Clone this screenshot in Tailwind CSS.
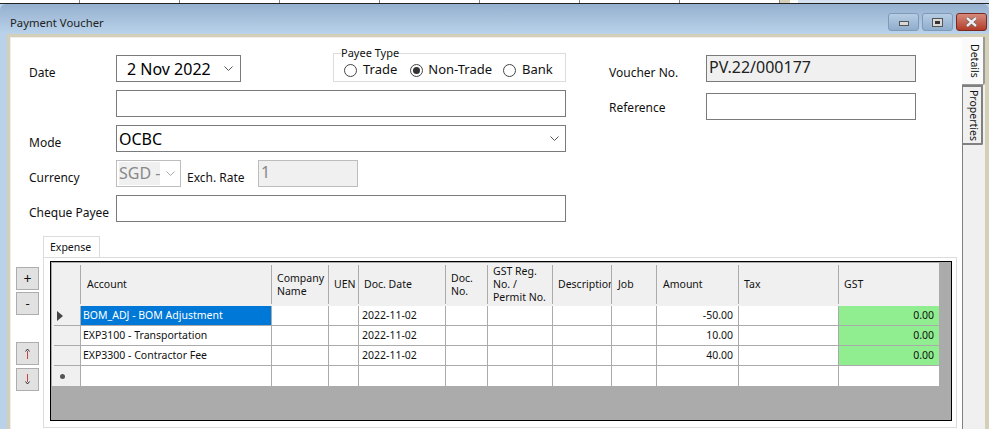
<!DOCTYPE html>
<html lang="en">
<head>
<meta charset="UTF-8">
<title>Payment Voucher</title>
<script src="https://cdn.jsdelivr.net/npm/@tailwindcss/browser@4"></script>
</head>
<body class="w-[989px] h-[429px] overflow-hidden bg-[#b9d2ea] font-['Noto_Sans',sans-serif] text-[12px] text-[#111]">
  <!-- strip of the window behind -->
  <div class="flex h-[4px] bg-white border-b border-[#222]">
    <div class="w-[80px] h-[3px] border-r border-[#888]"></div>
    <div class="w-[100px] h-[3px] border-r border-[#888]"></div>
    <div class="w-[100px] h-[3px] border-r border-[#888]"></div>
    <div class="w-[100px] h-[3px] border-r border-[#888]"></div>
    <div class="w-[100px] h-[3px] border-r border-[#888]"></div>
    <div class="w-[100px] h-[3px] border-r border-[#888]"></div>
    <div class="w-[100px] h-[3px] border-r border-[#888]"></div>
    <div class="w-[100px] h-[3px] border-r border-[#888]"></div>
    <div class="w-[10px] h-[3px] bg-[#d4d0b8]"></div>
    <div class="w-[8px] h-[3px]"></div>
    <div class="flex-1 h-[3px] bg-[#d6e2ef]"></div>
  </div>

  <!-- title bar -->
  <div class="flex h-[30px] rounded-t-[6px] bg-gradient-to-b from-[#95b0ce] to-[#bad3eb]">
    <div class="pl-[10px] pt-[11px] text-[11.3px] leading-[15px] text-[#222]">Payment Voucher</div>
    <div class="ml-auto flex gap-[3px] pt-[9px] pr-[2px]">
      <button class="w-[31px] h-[18px] flex items-end justify-center pb-[4px] rounded-[3px] border border-[#7f9ab8] bg-gradient-to-b from-[#b7cde4] to-[#8fadcc]">
        <span class="w-[10px] h-[5px] bg-[#d9d9d9] border border-[#555]"></span>
      </button>
      <button class="w-[31px] h-[18px] flex items-center justify-center rounded-[3px] border border-[#7f9ab8] bg-gradient-to-b from-[#b7cde4] to-[#8fadcc]">
        <span class="w-[9px] h-[7px] bg-[#333] border-2 border-[#d9d9d9] outline outline-[#555]"></span>
      </button>
      <button class="w-[31px] h-[18px] flex items-center justify-center rounded-[3px] border border-[#7a2a20] bg-gradient-to-b from-[#d68a7c] to-[#b23a28]">
        <svg width="13" height="10" viewBox="0 0 13 10"><path d="M2 1 L11 9 M11 1 L2 9" stroke="#555" stroke-width="3.6"/><path d="M2 1 L11 9 M11 1 L2 9" stroke="#eee" stroke-width="2.4"/></svg>
      </button>
    </div>
  </div>

  <!-- window frame -->
  <div class="flex h-[395px] ml-[7px] border-t-[3px] border-l-[3px] border-[#d4d0b8] bg-[#d4d0b8]">
    <div class="w-[952px] border-t border-l border-[#eee] bg-white shrink-0 pl-[18px] pt-[17px]">

      <div class="flex h-[97px]">
        <!-- left part of the header -->
        <div class="w-[537px] shrink-0">
          <div class="flex h-[35px]">
            <div class="w-[87px] pt-[10px] leading-[16px]">Date</div>
            <div class="w-[125px] h-[27px] border border-[#7a7a7a] flex items-center pl-[10px] pr-[7px] text-[16px] text-black">
              2 Nov 2022
              <svg class="ml-auto" width="9" height="5" viewBox="0 0 9 5"><path d="M0.5 0.5 L4.5 4.5 L8.5 0.5" fill="none" stroke="#555"/></svg>
            </div>
            <fieldset class="ml-[92px] -mt-[8px] w-[233px] h-[35px] border border-[#dcdcdc] pl-[7px]">
              <legend class="text-[11px] leading-[12px]">Payee Type</legend>
              <div class="flex items-center h-[22px] ml-[3px] text-[13px] whitespace-nowrap">
                <span class="w-[13px] h-[13px] rounded-full border border-[#444] bg-white"></span>
                <span class="ml-[6px]">Trade</span>
                <span class="ml-[13px] w-[13px] h-[13px] rounded-full border border-[#444] flex items-center justify-center"><span class="w-[7px] h-[7px] rounded-full bg-[#333]"></span></span>
                <span class="ml-[5px]">Non-Trade</span>
                <span class="ml-[11px] w-[13px] h-[13px] rounded-full border border-[#444] bg-white"></span>
                <span class="ml-[6px]">Bank</span>
              </div>
            </fieldset>
          </div>
          <div class="ml-[87px] w-[450px] h-[27px] border border-[#7a7a7a]"></div>
        </div>
        <!-- voucher side -->
        <div class="ml-[43px] w-[307px]">
          <div class="flex h-[38px]">
            <div class="w-[97px] pt-[10px] leading-[16px]">Voucher No.</div>
            <div class="w-[210px] h-[27px] border border-[#7a7a7a] bg-[#f0f0f0] pl-[2px] text-[16px] leading-[23px] text-[#222]">PV.22/000177</div>
          </div>
          <div class="flex">
            <div class="w-[97px] pt-[7px] leading-[16px]">Reference</div>
            <div class="w-[210px] h-[27px] border border-[#7a7a7a]"></div>
          </div>
        </div>
      </div>

      <div class="w-[537px] flex h-[35px] -mt-[27px] relative">
        <div class="w-[87px] pt-[10px] leading-[16px]">Mode</div>
        <div class="w-[450px] h-[27px] border border-[#7a7a7a] flex items-center pl-[2px] pr-[6px] text-[16px] text-black">
          OCBC
          <svg class="ml-auto" width="9" height="5" viewBox="0 0 9 5"><path d="M0.5 0.5 L4.5 4.5 L8.5 0.5" fill="none" stroke="#555"/></svg>
        </div>
      </div>
      <div class="flex h-[35px] w-[537px]">
        <div class="w-[87px] pt-[10px] leading-[16px]">Currency</div>
        <div class="w-[65px] h-[27px] border border-[#bdbdbd] flex items-center pl-[2px] pr-[5px]">
          <span class="bg-[#f0f0f0] text-[16px] leading-[23px] text-[#888] w-[41px] overflow-hidden whitespace-nowrap">SGD -</span>
          <svg class="ml-auto" width="9" height="5" viewBox="0 0 9 5"><path d="M0.5 0.5 L4.5 4.5 L8.5 0.5" fill="none" stroke="#aaa"/></svg>
        </div>
        <div class="ml-[6px] w-[71px] pt-[10px] leading-[16px]">Exch. Rate</div>
        <div class="w-[100px] h-[27px] border border-[#bdbdbd] bg-[#f0f0f0] pl-[2px] text-[16px] leading-[23px] text-[#888]">1</div>
      </div>
      <div class="flex h-[41px] w-[537px]">
        <div class="w-[87px] pt-[10px] leading-[16px] whitespace-nowrap">Cheque Payee</div>
        <div class="w-[450px] h-[27px] border border-[#7a7a7a]"></div>
      </div>

      <!-- expense tab + side buttons -->
      <div class="flex -ml-[13px]">
        <div class="w-[27px] shrink-0 pt-[31px]">
          <div class="w-[23px] h-[23px] mb-[2px] border border-[#adadad] bg-[#e1e1e1] flex items-center justify-center text-[14px] leading-none">+</div>
          <div class="w-[23px] h-[23px] border border-[#adadad] bg-[#e1e1e1] flex items-center justify-center text-[13px] leading-none">-</div>
          <div class="mt-[27px] w-[23px] h-[23px] mb-[3px] border border-[#adadad] bg-[#e1e1e1] flex items-center justify-center">
            <svg width="7" height="11" viewBox="0 0 7 11"><path d="M1.5 3.5 L3.5 1 L5.5 3.5" fill="none" stroke="#333"/><path d="M3.5 3 V11" stroke="#d04040"/></svg>
          </div>
          <div class="w-[23px] h-[23px] border border-[#adadad] bg-[#e1e1e1] flex items-center justify-center">
            <svg width="7" height="11" viewBox="0 0 7 11"><path d="M1.5 7.5 L3.5 10 L5.5 7.5" fill="none" stroke="#333"/><path d="M3.5 0 V8" stroke="#d04040"/></svg>
          </div>
        </div>
        <div class="w-[914px] shrink-0">
          <div class="w-[57px] h-[21px] border border-b-0 border-[#dcdcdc] bg-white pl-[6px] text-[10.5px] leading-[20px]">Expense</div>
          <div class="h-[171px] border border-[#dcdcdc] pt-[3px] pl-[6px]">
            <!-- grid -->
            <div class="w-[902px] h-[160px] border border-black bg-[#ababab] pl-[1px] pt-[1px]">
              <div class="grid grid-cols-[29px_191px_57px_30px_87px_42px_65px_59px_45px_82px_100px_100px] grid-rows-[43px_20px_20px_20px_20px] w-[887px] text-[10.5px] leading-[13px] text-[#111]">
                <div class="bg-[#f0f0f0] py-[2px]"><div class="h-full border-r border-[#ababab]"></div></div>
                <div class="bg-[#f0f0f0] py-[2px]"><div class="h-full border-r border-[#ababab] flex items-center pl-[6px]">Account</div></div>
                <div class="bg-[#f0f0f0] py-[2px]"><div class="h-full border-r border-[#ababab] flex items-center pl-[5px]">Company<br>Name</div></div>
                <div class="bg-[#f0f0f0] py-[2px]"><div class="h-full border-r border-[#ababab] flex items-center pl-[5px]">UEN</div></div>
                <div class="bg-[#f0f0f0] py-[2px]"><div class="h-full border-r border-[#ababab] flex items-center pl-[5px]">Doc. Date</div></div>
                <div class="bg-[#f0f0f0] py-[2px]"><div class="h-full border-r border-[#ababab] flex items-center pl-[5px]">Doc.<br>No.</div></div>
                <div class="bg-[#f0f0f0] py-[2px]"><div class="h-full border-r border-[#ababab] flex items-center pl-[5px]">GST Reg.<br>No. /<br>Permit No.</div></div>
                <div class="bg-[#f0f0f0] py-[2px]"><div class="h-full border-r border-[#ababab] flex items-center pl-[5px] overflow-hidden whitespace-nowrap">Description</div></div>
                <div class="bg-[#f0f0f0] py-[2px]"><div class="h-full border-r border-[#ababab] flex items-center pl-[6px]">Job</div></div>
                <div class="bg-[#f0f0f0] py-[2px]"><div class="h-full border-r border-[#ababab] flex items-center pl-[6px]">Amount</div></div>
                <div class="bg-[#f0f0f0] py-[2px]"><div class="h-full border-r border-[#ababab] flex items-center pl-[5px]">Tax</div></div>
                <div class="bg-[#f0f0f0] py-[2px]"><div class="h-full flex items-center pl-[5px]">GST</div></div>

                <div class="bg-[#f0f0f0] border-r border-[#ababab] pl-[2px]"><div class="h-full border-b border-[#ababab] flex items-center pl-[3px]"><svg width="6" height="10" viewBox="0 0 6 10"><path d="M0 0 L6 5 L0 10 Z" fill="#444"/></svg></div></div>
                <div class="bg-[#0078d7] text-white border-r border-b border-[#ababab] flex items-center pl-[2px]">BOM_ADJ - BOM Adjustment</div>
                <div class="bg-white border-r border-b border-[#ababab]"></div>
                <div class="bg-white border-r border-b border-[#ababab]"></div>
                <div class="bg-white border-r border-b border-[#ababab] flex items-center pl-[3px]">2022-11-02</div>
                <div class="bg-white border-r border-b border-[#ababab]"></div>
                <div class="bg-white border-r border-b border-[#ababab]"></div>
                <div class="bg-white border-r border-b border-[#ababab]"></div>
                <div class="bg-white border-r border-b border-[#ababab]"></div>
                <div class="bg-white border-r border-b border-[#ababab] flex items-center justify-end pr-[5px]">-50.00</div>
                <div class="bg-white border-r border-b border-[#ababab]"></div>
                <div class="bg-[#90ee90] border-b border-[#ababab] flex items-center justify-end pr-[5px]">0.00</div>

                <div class="bg-[#f0f0f0] border-r border-[#ababab] pl-[2px]"><div class="h-full border-b border-[#ababab]"></div></div>
                <div class="bg-white border-r border-b border-[#ababab] flex items-center pl-[2px]">EXP3100 - Transportation</div>
                <div class="bg-white border-r border-b border-[#ababab]"></div>
                <div class="bg-white border-r border-b border-[#ababab]"></div>
                <div class="bg-white border-r border-b border-[#ababab] flex items-center pl-[3px]">2022-11-02</div>
                <div class="bg-white border-r border-b border-[#ababab]"></div>
                <div class="bg-white border-r border-b border-[#ababab]"></div>
                <div class="bg-white border-r border-b border-[#ababab]"></div>
                <div class="bg-white border-r border-b border-[#ababab]"></div>
                <div class="bg-white border-r border-b border-[#ababab] flex items-center justify-end pr-[5px]">10.00</div>
                <div class="bg-white border-r border-b border-[#ababab]"></div>
                <div class="bg-[#90ee90] border-b border-[#ababab] flex items-center justify-end pr-[5px]">0.00</div>

                <div class="bg-[#f0f0f0] border-r border-[#ababab] pl-[2px]"><div class="h-full border-b border-[#ababab]"></div></div>
                <div class="bg-white border-r border-b border-[#ababab] flex items-center pl-[2px]">EXP3300 - Contractor Fee</div>
                <div class="bg-white border-r border-b border-[#ababab]"></div>
                <div class="bg-white border-r border-b border-[#ababab]"></div>
                <div class="bg-white border-r border-b border-[#ababab] flex items-center pl-[3px]">2022-11-02</div>
                <div class="bg-white border-r border-b border-[#ababab]"></div>
                <div class="bg-white border-r border-b border-[#ababab]"></div>
                <div class="bg-white border-r border-b border-[#ababab]"></div>
                <div class="bg-white border-r border-b border-[#ababab]"></div>
                <div class="bg-white border-r border-b border-[#ababab] flex items-center justify-end pr-[5px]">40.00</div>
                <div class="bg-white border-r border-b border-[#ababab]"></div>
                <div class="bg-[#90ee90] border-b border-[#ababab] flex items-center justify-end pr-[5px]">0.00</div>

                <div class="bg-[#f0f0f0] border-r border-[#ababab] flex items-center pl-[8px]"><span class="w-[5px] h-[5px] rounded-full bg-[#555]"></span></div>
                <div class="bg-white border-r border-[#ababab]"></div>
                <div class="bg-white border-r border-[#ababab]"></div>
                <div class="bg-white border-r border-[#ababab]"></div>
                <div class="bg-white border-r border-[#ababab]"></div>
                <div class="bg-white border-r border-[#ababab]"></div>
                <div class="bg-white border-r border-[#ababab]"></div>
                <div class="bg-white border-r border-[#ababab]"></div>
                <div class="bg-white border-r border-[#ababab]"></div>
                <div class="bg-white border-r border-[#ababab]"></div>
                <div class="bg-white border-r border-[#ababab]"></div>
                <div class="bg-white"></div>
              </div>
            </div>
          </div>
        </div>
      </div>
    </div>

    <!-- vertical tabs -->
    <div class="w-[23px] bg-[#f0f0f0] border-l border-[#808080] text-[10.5px] shrink-0">
      <div class="-ml-[1px] h-[48px] w-[23px] bg-[#fafafa] flex items-center justify-center pl-[3px] border-r-2 border-b border-[#999] rounded-br-[2px]"><span class="[writing-mode:vertical-rl]">Details</span></div>
      <div class="h-[60px] w-[20px] bg-[#f0f0f0] flex items-center justify-center pl-[2px] border border-l-0 border-t-2 border-r-2 border-b-2 border-[#808080] rounded-br-[2px]"><span class="[writing-mode:vertical-rl]">Properties</span></div>
    </div>
  </div>
</body>
</html>
